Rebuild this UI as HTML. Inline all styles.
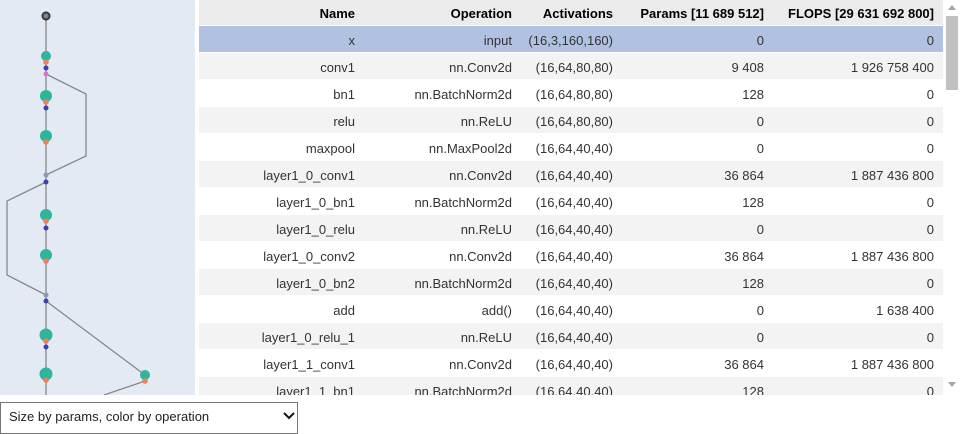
<!DOCTYPE html>
<html><head><meta charset="utf-8"><style>
body{margin:0;width:961px;height:429px;overflow:hidden;background:#fff;font-family:"Liberation Sans",sans-serif;position:relative}
#g{position:absolute;left:0;top:0;width:195px;height:395px;background:#e4eaf4}
#t{position:absolute;left:199px;top:0;width:744px;height:395px;overflow:hidden}
.r{position:absolute;left:0;width:744px;height:26px;font-size:13px;color:#333}
.r span{position:absolute;top:7px;text-align:right;white-space:nowrap}
.h{background:#ebebeb;color:#000;font-weight:bold;height:25px}
.h span{top:6px}
.c1{right:588px}.c2{right:431px}.c3{right:330px}.c4{right:179px}.c5{right:9px}
#sb{position:absolute;left:943px;top:0;width:18px;height:395px;background:#fff}
#th{position:absolute;left:946px;top:16px;width:12px;height:74px;background:#c1c1c1}
#sel{position:absolute;left:0;top:402px;width:296px;height:30px;border:1px solid #767676;font-size:13px;color:#222}
</style></head><body>
<div id="g"><svg width="195" height="395">
<g stroke="#888" stroke-width="1.3" fill="none">
<line x1="46" y1="16" x2="46" y2="395"/>
<polyline points="46,74 86,94 86,156 46,175"/>
<polyline points="46,182 7,201 7,275 46,295"/>
<line x1="46" y1="301" x2="145" y2="375"/>
<line x1="145" y1="381" x2="104" y2="395"/>
</g>
<circle cx="46" cy="16" r="4" fill="#555" stroke="#222"/><circle cx="46" cy="16" r="2" fill="#888"/>
<g fill="#2fb59a">
<circle cx="46" cy="56" r="5"/><circle cx="46" cy="96" r="6"/><circle cx="46" cy="136" r="6"/>
<circle cx="46" cy="215" r="6"/><circle cx="46" cy="255" r="6"/><circle cx="46" cy="335" r="6.5"/><circle cx="46" cy="374" r="6.5"/><circle cx="145" cy="375" r="5"/></g>
<g fill="#e9825a">
<circle cx="46" cy="62" r="2.8"/><circle cx="46" cy="102" r="2.8"/><circle cx="46" cy="142" r="2.8"/><circle cx="46" cy="221" r="2.8"/><circle cx="46" cy="261" r="2.8"/><circle cx="46" cy="341" r="2.8"/><circle cx="46" cy="380" r="2.8"/><circle cx="145" cy="381" r="2.8"/></g>
<g fill="#3c3fb0">
<circle cx="46" cy="68" r="2.5"/><circle cx="46" cy="108" r="2.5"/><circle cx="46" cy="182" r="2.5"/><circle cx="46" cy="228" r="2.5"/><circle cx="46" cy="301" r="2.5"/><circle cx="46" cy="347" r="2.5"/></g>
<circle cx="46" cy="74" r="2.5" fill="#d973d0"/>
<circle cx="46" cy="175" r="2.5" fill="#8899bb"/><circle cx="46" cy="295" r="2.5" fill="#8899bb"/>
</svg></div>
<div id="t">
<div class="r h" style="top:0"><span class="c1">Name</span><span class="c2">Operation</span><span class="c3">Activations</span><span class="c4">Params [11 689 512]</span><span class="c5">FLOPS [29 631 692 800]</span></div>
<div class="r" style="top:26px;background:#b0c1e1"><span class="c1">x</span><span class="c2">input</span><span class="c3">(16,3,160,160)</span><span class="c4">0</span><span class="c5">0</span></div>
<div class="r" style="top:53px;background:#f3f3f3"><span class="c1">conv1</span><span class="c2">nn.Conv2d</span><span class="c3">(16,64,80,80)</span><span class="c4">9 408</span><span class="c5">1 926 758 400</span></div>
<div class="r" style="top:80px"><span class="c1">bn1</span><span class="c2">nn.BatchNorm2d</span><span class="c3">(16,64,80,80)</span><span class="c4">128</span><span class="c5">0</span></div>
<div class="r" style="top:107px;background:#f3f3f3"><span class="c1">relu</span><span class="c2">nn.ReLU</span><span class="c3">(16,64,80,80)</span><span class="c4">0</span><span class="c5">0</span></div>
<div class="r" style="top:134px"><span class="c1">maxpool</span><span class="c2">nn.MaxPool2d</span><span class="c3">(16,64,40,40)</span><span class="c4">0</span><span class="c5">0</span></div>
<div class="r" style="top:161px;background:#f3f3f3"><span class="c1">layer1_0_conv1</span><span class="c2">nn.Conv2d</span><span class="c3">(16,64,40,40)</span><span class="c4">36 864</span><span class="c5">1 887 436 800</span></div>
<div class="r" style="top:188px"><span class="c1">layer1_0_bn1</span><span class="c2">nn.BatchNorm2d</span><span class="c3">(16,64,40,40)</span><span class="c4">128</span><span class="c5">0</span></div>
<div class="r" style="top:215px;background:#f3f3f3"><span class="c1">layer1_0_relu</span><span class="c2">nn.ReLU</span><span class="c3">(16,64,40,40)</span><span class="c4">0</span><span class="c5">0</span></div>
<div class="r" style="top:242px"><span class="c1">layer1_0_conv2</span><span class="c2">nn.Conv2d</span><span class="c3">(16,64,40,40)</span><span class="c4">36 864</span><span class="c5">1 887 436 800</span></div>
<div class="r" style="top:269px;background:#f3f3f3"><span class="c1">layer1_0_bn2</span><span class="c2">nn.BatchNorm2d</span><span class="c3">(16,64,40,40)</span><span class="c4">128</span><span class="c5">0</span></div>
<div class="r" style="top:296px"><span class="c1">add</span><span class="c2">add()</span><span class="c3">(16,64,40,40)</span><span class="c4">0</span><span class="c5">1 638 400</span></div>
<div class="r" style="top:323px;background:#f3f3f3"><span class="c1">layer1_0_relu_1</span><span class="c2">nn.ReLU</span><span class="c3">(16,64,40,40)</span><span class="c4">0</span><span class="c5">0</span></div>
<div class="r" style="top:350px"><span class="c1">layer1_1_conv1</span><span class="c2">nn.Conv2d</span><span class="c3">(16,64,40,40)</span><span class="c4">36 864</span><span class="c5">1 887 436 800</span></div>
<div class="r" style="top:377px;background:#f3f3f3"><span class="c1">layer1_1_bn1</span><span class="c2">nn.BatchNorm2d</span><span class="c3">(16,64,40,40)</span><span class="c4">128</span><span class="c5">0</span></div>
</div>
<div id="sb"><div style="position:absolute;left:5px;top:5px;width:0;height:0;border-left:4px solid transparent;border-right:4px solid transparent;border-bottom:5px solid #a3a3a3"></div><div id="th" style="left:3px"></div><div style="position:absolute;left:5px;top:382px;border-left:4px solid transparent;border-right:4px solid transparent;border-top:5px solid #a3a3a3"></div></div>
<div id="sel"><span style="position:absolute;left:8px;top:6px">Size by params, color by operation</span>
<svg style="position:absolute;left:282px;top:8px" width="12" height="10"><polyline points="1,2 6,7 11,2" fill="none" stroke="#111" stroke-width="2"/></svg></div>
</body></html>
